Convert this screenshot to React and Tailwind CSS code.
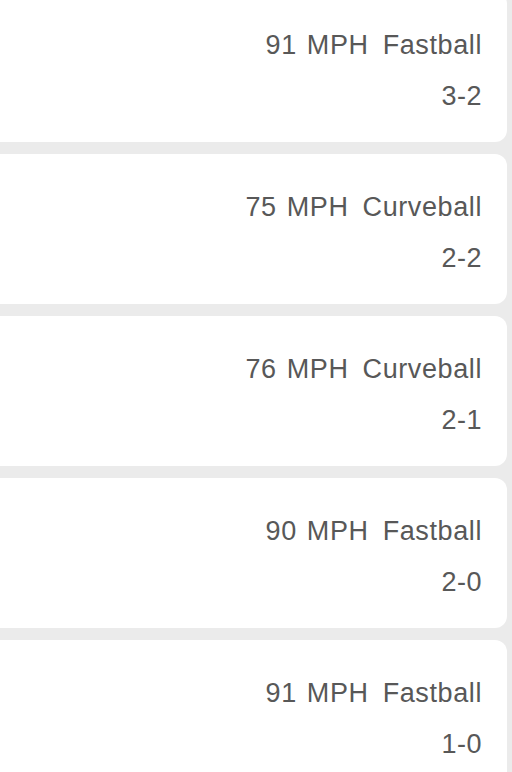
const pitches = [
    { speed: 91, type: "Fastball", count: "3-2" },
    { speed: 75, type: "Curveball", count: "2-2" },
    { speed: 76, type: "Curveball", count: "2-1" },
    { speed: 90, type: "Fastball", count: "2-0" },
    { speed: 91, type: "Fastball", count: "1-0" },
];

const PitchCard = ({ speed, type, count }) => (
    <div className="h-[150px] shrink-0 -ml-6 mr-[5px] rounded-xl bg-white pr-[25px] pt-[36px] text-right text-[27px] leading-[34px] text-[#585858]">
        <div className="tracking-[0.6px] [word-spacing:2px]">
            {speed} MPH<span className="ml-[14px]">{type}</span>
        </div>
        <div className="mt-[17px] tracking-[0.5px]">{count}</div>
    </div>
);

export default function App() {
    return (
        <div
            className="h-[772px] overflow-hidden bg-[#ebebeb]"
            style={{ fontFamily: '"Liberation Sans", Arial, sans-serif' }}
        >
            <div className="-mt-2 flex flex-col gap-3">
                {pitches.map((p, i) => (
                    <PitchCard key={i} {...p} />
                ))}
            </div>
        </div>
    );
}
